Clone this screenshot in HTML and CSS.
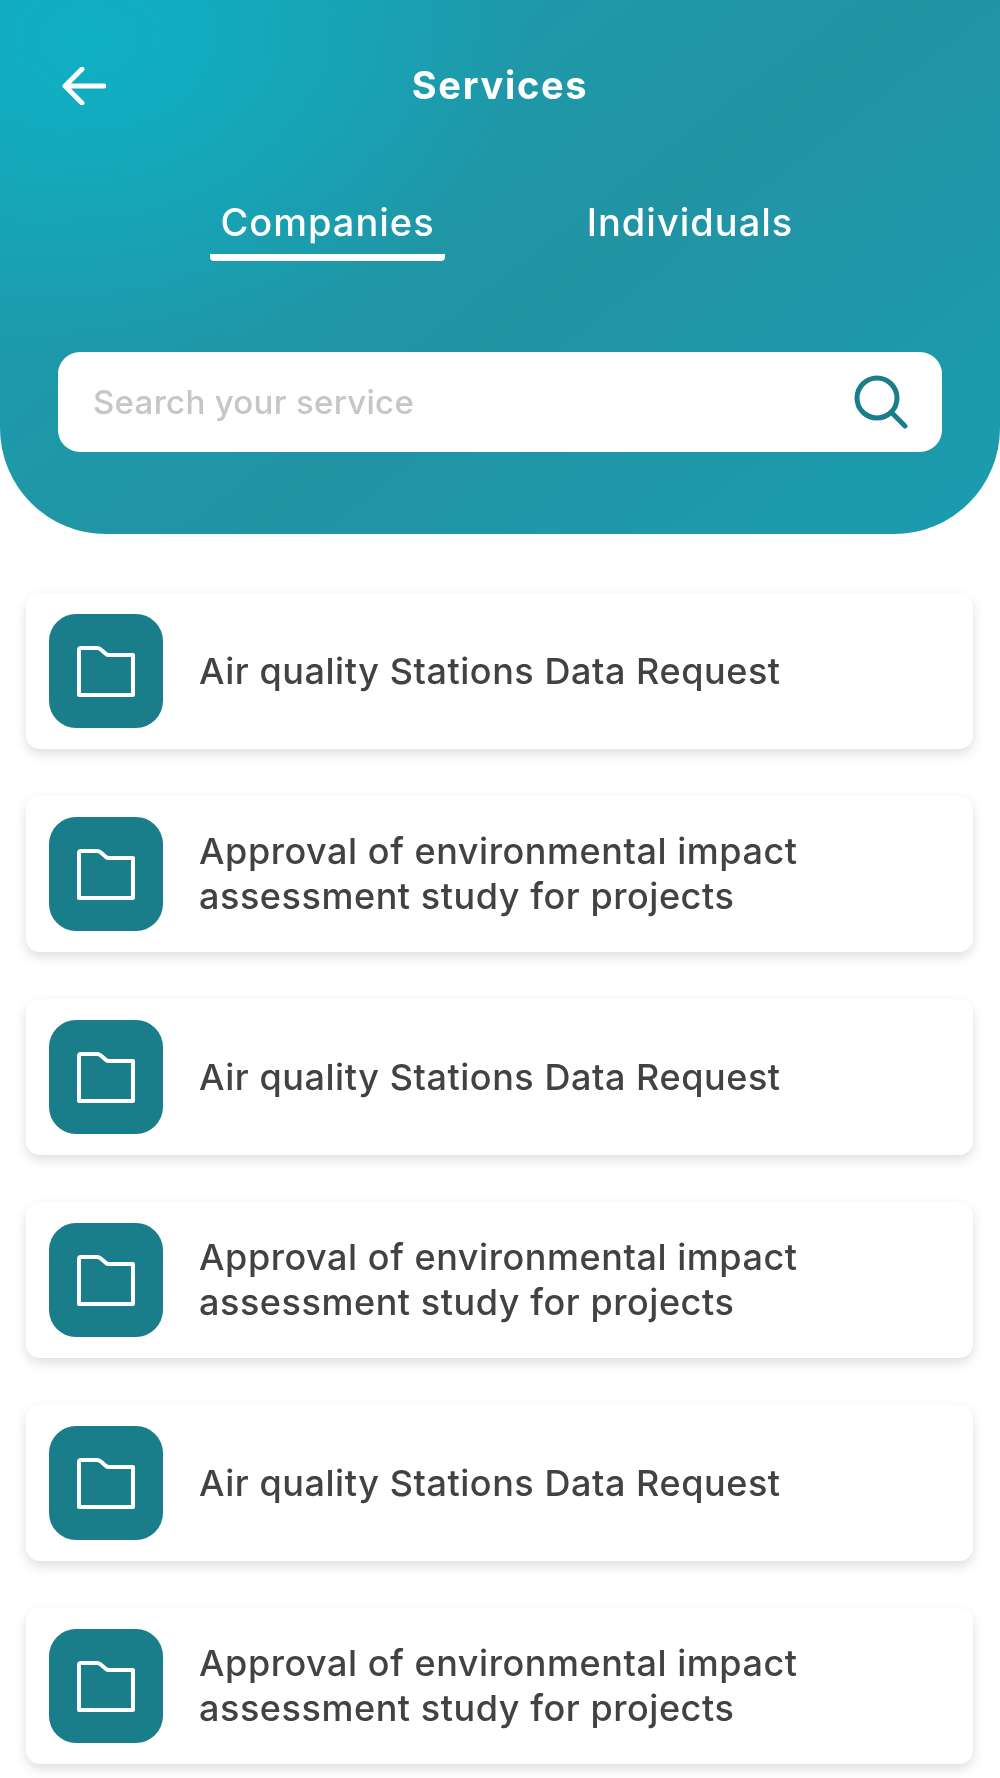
FILE: index.html
```html
<!DOCTYPE html>
<html lang="en">
<head>
<meta charset="utf-8">
<title>Services</title>
<link rel="stylesheet" href="styles.css">
</head>
<body>
<header class="hero">
  <div class="topbar">
    <svg class="back" viewBox="0 0 44 38" width="44" height="38" aria-hidden="true"><path d="M42 19H3M20 2 3 19l17 17"/></svg>
    <h1 class="title">Services</h1>
  </div>
  <nav class="tabs">
    <a class="tab tab-active">Companies</a>
    <a class="tab tab-second">Individuals</a>
  </nav>
  <div class="search">
    <span class="placeholder">Search your service</span>
    <svg class="search-icon" viewBox="0 0 54 54" width="54" height="54" aria-hidden="true"><circle cx="23" cy="23" r="20"/><path d="M37.500 37.500 51 51"/></svg>
  </div>
</header>
<main class="list">
  <article class="card"><div class="badge"><svg class="folder" viewBox="0 0 58 51" width="58" height="51" aria-hidden="true"><path d="M4 2h16q2 0 3.500 1.200L29 8q1 1 3 1h24v40H2V4q0-2 2-2z"/></svg></div><p class="label">Air quality Stations Data Request</p></article>
  <article class="card"><div class="badge"><svg class="folder" viewBox="0 0 58 51" width="58" height="51" aria-hidden="true"><path d="M4 2h16q2 0 3.500 1.200L29 8q1 1 3 1h24v40H2V4q0-2 2-2z"/></svg></div><p class="label">Approval of environmental impact assessment study for projects</p></article>
  <article class="card"><div class="badge"><svg class="folder" viewBox="0 0 58 51" width="58" height="51" aria-hidden="true"><path d="M4 2h16q2 0 3.500 1.200L29 8q1 1 3 1h24v40H2V4q0-2 2-2z"/></svg></div><p class="label">Air quality Stations Data Request</p></article>
  <article class="card"><div class="badge"><svg class="folder" viewBox="0 0 58 51" width="58" height="51" aria-hidden="true"><path d="M4 2h16q2 0 3.500 1.200L29 8q1 1 3 1h24v40H2V4q0-2 2-2z"/></svg></div><p class="label">Approval of environmental impact assessment study for projects</p></article>
  <article class="card"><div class="badge"><svg class="folder" viewBox="0 0 58 51" width="58" height="51" aria-hidden="true"><path d="M4 2h16q2 0 3.500 1.200L29 8q1 1 3 1h24v40H2V4q0-2 2-2z"/></svg></div><p class="label">Air quality Stations Data Request</p></article>
  <article class="card"><div class="badge"><svg class="folder" viewBox="0 0 58 51" width="58" height="51" aria-hidden="true"><path d="M4 2h16q2 0 3.500 1.200L29 8q1 1 3 1h24v40H2V4q0-2 2-2z"/></svg></div><p class="label">Approval of environmental impact assessment study for projects</p></article>
</main>
</body>
</html>
```
FILE: styles.css
```css
* { box-sizing: border-box; }
html, body { margin: 0; padding: 0; }
body {
  width: 1000px;
  height: 1778px;
  overflow: hidden;
  background: #fff;
  font-family: Inter, "Liberation Sans", sans-serif;
  filter: blur(0.5px);
}
.hero {
  height: 534px;
  padding: 58px 58px 0;
  border-radius: 0 0 106px 106px;
  background:
    radial-gradient(ellipse 430px 320px at 90px 40px, #0fb0c5 0%, rgba(15, 176, 197, 0) 100%),
    linear-gradient(142deg, #1a9fb0 0%, #2194a4 55%, #1a9cae 100%);
}
.topbar {
  position: relative;
  height: 54px;
  display: flex;
  align-items: center;
  justify-content: center;
}
.back {
  position: absolute;
  left: 4px;
  top: 9px;
  fill: none;
  stroke: #fff;
  stroke-width: 5;
  stroke-linecap: round;
  stroke-linejoin: round;
}
.title {
  margin: 0;
  color: #fff;
  font-size: 38px;
  font-weight: 700;
  letter-spacing: 1.700px;
}
.tabs {
  margin-top: 84px;
  display: flex;
  gap: 140px;
  padding-left: 152px;
}
.tab {
  width: 235px;
  padding-bottom: 6px;
  color: #fff;
  font-size: 38px;
  font-weight: 500;
  line-height: 52px;
  letter-spacing: 1px;
  text-align: center;
  border-bottom: 7px solid transparent;
  border-radius: 4px;
}
.tab-second { width: 210px; }
.tab-active { border-bottom-color: #fff; }
.search {
  margin-top: 91px;
  height: 100px;
  padding: 0 34px 0 35px;
  display: flex;
  align-items: center;
  justify-content: space-between;
  border-radius: 22px;
  background: #fff;
}
.placeholder {
  color: #c6c6c6;
  font-size: 33px;
  font-weight: 500;
  letter-spacing: 0.300px;
}
.search-icon {
  fill: none;
  stroke: #1a7d8a;
  stroke-width: 5;
  stroke-linecap: round;
}
.list {
  margin-top: 59px;
  padding: 0 27px 0 26px;
  display: flex;
  flex-direction: column;
  gap: 47px;
}
.card {
  height: 156px;
  padding: 0 23px;
  display: flex;
  align-items: center;
  gap: 36px;
  border-radius: 14px;
  background: #fff;
  box-shadow: 0 5px 12px rgba(0, 0, 0, 0.13);
}
.badge {
  flex: none;
  width: 114px;
  height: 114px;
  display: flex;
  align-items: center;
  justify-content: center;
  border-radius: 27px;
  background: #1a7d8a;
}
.folder {
  fill: none;
  stroke: #fff;
  stroke-width: 4;
  stroke-linejoin: round;
}
.label {
  margin: 0;
  color: #424242;
  font-size: 36px;
  font-weight: 500;
  line-height: 45px;
  letter-spacing: 0.550px;
}
```
